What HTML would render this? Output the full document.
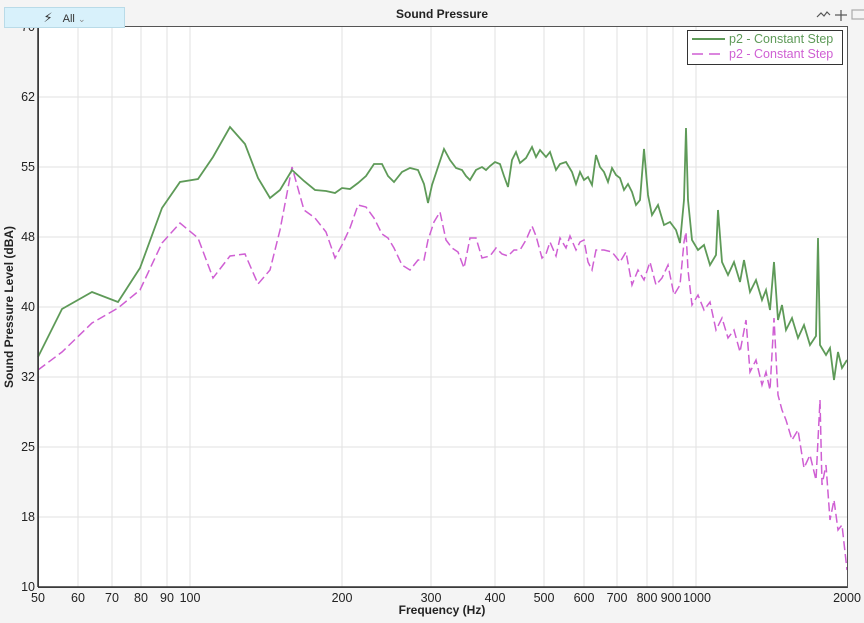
<!DOCTYPE html>
<html><head><meta charset="utf-8"><style>
body{margin:0;width:864px;height:623px;background:#f4f4f4;font-family:"Liberation Sans","DejaVu Sans",sans-serif;overflow:hidden;position:relative}
.btn{position:absolute;left:4px;top:7px;width:121px;height:21px;background:#d8f1fb;border:1px solid #b9dbe8;box-sizing:border-box;font-size:11px;color:#333;text-align:center;line-height:20px}
</style></head><body>
<svg width="864" height="623" style="position:absolute;left:0;top:0" font-family="Liberation Sans, DejaVu Sans, sans-serif">
<rect x="38" y="26" width="809" height="561" fill="#fff"/>
<g stroke="#e2e2e2" stroke-width="1">
<line x1="78" y1="26" x2="78" y2="587"/><line x1="112" y1="26" x2="112" y2="587"/><line x1="141" y1="26" x2="141" y2="587"/><line x1="167" y1="26" x2="167" y2="587"/><line x1="190" y1="26" x2="190" y2="587"/><line x1="342" y1="26" x2="342" y2="587"/><line x1="431" y1="26" x2="431" y2="587"/><line x1="495" y1="26" x2="495" y2="587"/><line x1="544" y1="26" x2="544" y2="587"/><line x1="584" y1="26" x2="584" y2="587"/><line x1="617" y1="26" x2="617" y2="587"/><line x1="647" y1="26" x2="647" y2="587"/><line x1="673" y1="26" x2="673" y2="587"/><line x1="696" y1="26" x2="696" y2="587"/>
<line x1="38" y1="97" x2="847" y2="97"/><line x1="38" y1="167" x2="847" y2="167"/><line x1="38" y1="237" x2="847" y2="237"/><line x1="38" y1="307" x2="847" y2="307"/><line x1="38" y1="377" x2="847" y2="377"/><line x1="38" y1="447" x2="847" y2="447"/><line x1="38" y1="517" x2="847" y2="517"/>
</g>
<polyline fill="none" stroke="#cf5fd3" stroke-width="1.5" stroke-dasharray="9,4" points="38,370 62,352 92,323 118,308 140,290 162,243 180,223 198,238 213,278 230,256 245,254 258,284 270,270 280,230 292,167 304,210 315,218 326,232 335,258 342,245 350,228 358,205 366,207 374,218 382,234 388,238 394,248 402,265 410,270 418,260 424,260 428,240 434,222 440,212 446,240 452,248 458,252 464,268 470,238 476,238 482,258 490,256 496,248 502,254 508,256 514,250 520,250 526,240 532,226 536,236 542,258 546,254 550,242 556,256 560,238 566,248 570,236 576,250 580,242 584,240 588,262 592,270 596,250 604,250 612,252 620,262 626,252 632,285 638,270 644,280 650,262 656,285 662,278 668,265 674,295 680,285 684,242 686,232 688,270 692,305 698,295 704,310 710,302 716,330 722,318 728,338 734,330 740,352 746,320 750,372 756,360 762,385 766,372 770,390 774,318 778,395 782,410 786,420 792,440 798,430 804,468 810,455 816,480 820,400 822,485 826,465 830,520 834,500 838,530 842,525 847,570"/>
<polyline fill="none" stroke="#5e9a58" stroke-width="1.8" points="38,357 62,309 92,292 118,302 140,268 162,208 180,182 198,179 213,157 230,127 245,144 258,178 270,198 280,190 292,170 304,181 315,190 326,191 335,193 342,188 350,189 358,183 366,176 374,164 382,164 388,176 394,182 402,172 410,168 418,170 424,184 428,203 432,185 438,167 444,149 450,160 456,168 462,170 466,176 470,180 476,170 482,167 486,170 490,166 495,162 500,164 504,176 508,187 512,160 516,152 520,163 526,158 532,147 536,157 540,150 546,157 550,152 556,170 560,164 566,162 572,172 576,184 580,172 584,180 588,177 592,185 596,155 600,167 604,172 608,182 612,168 616,175 620,178 624,190 628,184 632,192 636,205 640,200 644,149 648,195 652,215 658,205 664,225 670,222 676,230 680,243 684,200 686,128 688,200 692,240 698,250 704,245 710,265 716,255 718,210 722,262 728,275 734,262 740,282 744,260 750,292 756,280 762,300 766,290 770,310 774,262 778,320 782,305 786,330 792,318 798,338 804,325 810,345 816,336 818,238 820,345 826,355 830,348 834,380 838,352 842,368 847,360"/>
<rect x="38.5" y="26.5" width="809" height="561" fill="none" stroke="#555" stroke-width="1"/>
<line x1="38" y1="26" x2="38" y2="587" stroke="#333" stroke-width="1.5"/>
<line x1="38" y1="587" x2="847" y2="587" stroke="#333" stroke-width="1.5"/>
<rect x="687.5" y="30.5" width="155" height="34" fill="#fff" stroke="#333"/>
<line x1="692" y1="39" x2="725" y2="39" stroke="#5e9a58" stroke-width="2"/>
<line x1="692" y1="54" x2="725" y2="54" stroke="#cf5fd3" stroke-width="1.5" stroke-dasharray="11,6"/>
<text x="729" y="43" font-size="12.5" fill="#5e9a58">p2  - Constant Step</text>
<text x="729" y="58" font-size="12.5" fill="#cf5fd3">p2  - Constant Step</text>
<text x="442" y="18" font-size="12" font-weight="bold" text-anchor="middle" fill="#222">Sound Pressure</text>
<g font-size="12.5" fill="#222" text-anchor="end">
<text x="35" y="31">70</text><text x="35" y="101">62</text><text x="35" y="171">55</text><text x="35" y="241">48</text><text x="35" y="311">40</text><text x="35" y="381">32</text><text x="35" y="451">25</text><text x="35" y="521">18</text><text x="35" y="591">10</text>
</g>
<g font-size="12.5" fill="#222" text-anchor="middle">
<text x="38" y="602">50</text><text x="78" y="602">60</text><text x="112" y="602">70</text><text x="141" y="602">80</text><text x="167" y="602">90</text><text x="190" y="602">100</text><text x="342" y="602">200</text><text x="431" y="602">300</text><text x="495" y="602">400</text><text x="544" y="602">500</text><text x="584" y="602">600</text><text x="617" y="602">700</text><text x="647" y="602">800</text><text x="671" y="602">900</text><text x="697" y="602">1000</text><text x="847" y="602">2000</text>
</g>
<text x="442" y="614" font-size="12" font-weight="bold" text-anchor="middle" fill="#222">Frequency (Hz)</text>
<text transform="translate(13,307) rotate(-90)" font-size="12" font-weight="bold" text-anchor="middle" fill="#222">Sound Pressure Level (dBA)</text>
<g stroke="#555" fill="none" stroke-width="1.2">
<polyline points="817,17 821,13 824,16 827,12 830,15"/>
<line x1="841" y1="10" x2="841" y2="21"/><line x1="835" y1="15" x2="847" y2="15"/>
<rect x="852" y="10" width="14" height="9" stroke="#aaa"/>
</g>
</svg>
<div class="btn"><span style="font-weight:bold;margin-right:10px;font-size:13px">⚡</span>All <span style="color:#888;font-size:9px">⌄</span></div>
</body></html>
